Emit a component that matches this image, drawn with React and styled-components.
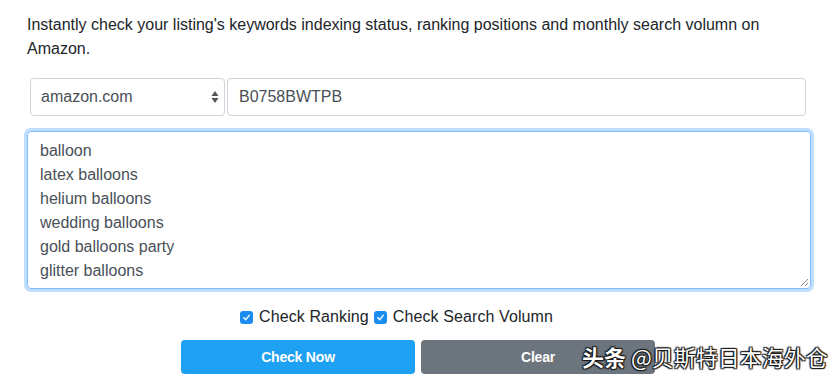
import React from "react";
import styled, { createGlobalStyle } from "styled-components";

const Global = createGlobalStyle`
  html, body { margin: 0; padding: 0; background: #fff; }
  body { font-family: "Liberation Sans", Arial, sans-serif; color: #212529; }
  * { box-sizing: border-box; }
`;

const Page = styled.div`
  position: relative;
  width: 830px;
  height: 380px;
  padding: 13px 19px 0 27px;
  overflow: hidden;
`;

const Intro = styled.p`
  margin: 0 0 17px;
  font-size: 16px;
  line-height: 24px;
  color: #212529;
`;

const InputRow = styled.div`
  display: flex;
  gap: 2px;
  padding: 0 5px 0 3px;
  margin-bottom: 15px;
`;

const SelectBox = styled.div`
  position: relative;
  width: 195px;
  height: 38px;
  border: 1px solid #ced4da;
  border-radius: 4px;
  display: flex;
  align-items: center;
  padding: 0 10px;
  font-size: 16px;
  color: #495057;
`;

const Arrows = styled.svg`
  position: absolute;
  right: 4px;
  top: 50%;
  transform: translateY(-50%);
`;

const TextInput = styled.div`
  flex: 1;
  height: 38px;
  border: 1px solid #ced4da;
  border-radius: 4px;
  display: flex;
  align-items: center;
  padding: 0 11px;
  font-size: 16px;
  color: #495057;
`;

const TextArea = styled.div`
  position: relative;
  height: 158px;
  border: 1px solid #80bdff;
  border-radius: 4px;
  box-shadow: 0 0 0 3px rgba(0, 123, 255, 0.25);
  padding: 7px 12px 5px;
  font-size: 16px;
  line-height: 24px;
  color: #495057;
  margin-bottom: 18px;
`;

const Line = styled.div``;

const Grip = styled.svg`
  position: absolute;
  right: 1px;
  bottom: 1px;
`;

const CheckRow = styled.div`
  display: flex;
  justify-content: center;
  align-items: center;
  gap: 5px;
  padding-right: 45px;
  font-size: 16px;
  line-height: 20px;
  margin-bottom: 13px;
`;

const CheckLabel = styled.label`
  display: flex;
  align-items: center;
  gap: 6px;
  color: #212529;
  letter-spacing: 0.1px;
`;

const Box = styled.span`
  width: 13px;
  height: 13px;
  border-radius: 3px;
  background: #1a8cf0;
  display: inline-flex;
  align-items: center;
  justify-content: center;
`;

const ButtonRow = styled.div`
  display: flex;
  justify-content: center;
  gap: 6px;
  padding-right: 2px;
`;

const Button = styled.button`
  width: 234px;
  height: 34px;
  border: none;
  border-radius: 4px;
  background: ${(p) => (p.$variant === "gray" ? "#6c757d" : "#1ea1f2")};
  color: #fff;
  font-family: "Liberation Sans", Arial, sans-serif;
  font-weight: bold;
  font-size: 14px;
  letter-spacing: -0.2px;
  padding: 0;
`;

const Watermark = styled.div`
  position: absolute;
  left: 582px;
  top: 341px;
  font-family: "Noto Sans CJK SC", "Noto Sans", sans-serif;
  font-size: 22px;
  line-height: 30px;
  color: #fff;
  letter-spacing: 0;
  text-shadow: 0 0 1px #000, 0 0 1px #000, 1px 1px 1px #222, -1px -1px 1px #222, 1px -1px 1px #222, -1px 1px 1px #222;
`;

const Strong = styled.span`
  font-weight: 700;
`;

const Check = () => (
  <Box>
    <svg width="9" height="9" viewBox="0 0 10 10">
      <path d="M2 5.2 L4.2 7.4 L8 2.6" fill="none" stroke="#fff" strokeWidth="1.6" strokeLinecap="round" strokeLinejoin="round" />
    </svg>
  </Box>
);

const keywords = [
  "balloon",
  "latex balloons",
  "helium balloons",
  "wedding balloons",
  "gold balloons party",
  "glitter balloons",
];

export default function App() {
  return (
    <>
      <Global />
      <Page>
        <Intro>
          Instantly check your listing's keywords indexing status, ranking positions and monthly search volumn on Amazon.
        </Intro>
        <InputRow>
          <SelectBox>
            amazon.com
            <Arrows width="10" height="16" viewBox="0 0 10 16">
              <path d="M5 2 L8.5 7 L1.5 7 Z" fill="#555" />
              <path d="M5 14 L8.5 9 L1.5 9 Z" fill="#555" />
            </Arrows>
          </SelectBox>
          <TextInput>B0758BWTPB</TextInput>
        </InputRow>
        <TextArea>
          {keywords.map((k) => (
            <Line key={k}>{k}</Line>
          ))}
          <Grip width="9" height="9" viewBox="0 0 9 9">
            <path d="M8 1 L1 8 M8 5 L5 8" stroke="#888" strokeWidth="1" />
          </Grip>
        </TextArea>
        <CheckRow>
          <CheckLabel>
            <Check />
            Check Ranking
          </CheckLabel>
          <CheckLabel>
            <Check />
            Check Search Volumn
          </CheckLabel>
        </CheckRow>
        <ButtonRow>
          <Button>Check Now</Button>
          <Button $variant="gray">Clear</Button>
        </ButtonRow>
        <Watermark>
          <Strong>头条</Strong> @贝斯特日本海外仓
        </Watermark>
      </Page>
    </>
  );
}
